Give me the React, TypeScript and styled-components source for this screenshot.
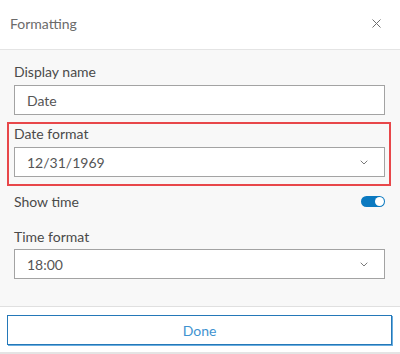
import React from "react";
import styled, { createGlobalStyle } from "styled-components";

const Global = createGlobalStyle`
  html, body { margin: 0; padding: 0; background: #ffffff; }
  body { font-family: Lato, "Noto Sans", sans-serif; }
  * { box-sizing: border-box; }
`;

const Panel = styled.div`
  width: 400px;
  height: 354px;
  display: flex;
  flex-direction: column;
  background: #ffffff;
`;

const Header = styled.div`
  height: 50px;
  display: flex;
  align-items: center;
  justify-content: space-between;
  padding: 0 16px 0 10px;
  border-bottom: 1px solid #e4e4e4;
`;

const Title = styled.div`
  font-size: 14px;
  color: #6b6b6b;
  padding-bottom: 2px;
`;

const CloseButton = styled.button`
  width: 16px;
  height: 16px;
  padding: 0;
  border: 0;
  background: transparent;
  display: flex;
  align-items: center;
  justify-content: center;
  margin-bottom: 2px;
`;

const Body = styled.div`
  height: 257px;
  background: #f8f8f8;
  padding: 12px 15px 0 14px;
  display: flex;
  flex-direction: column;
  border-bottom: 1px solid #e0e0e0;
`;

const Field = styled.div<{ $highlight?: boolean; $gap?: number }>`
  display: flex;
  flex-direction: column;
  margin-top: ${(p) => p.$gap ?? 0}px;
  ${(p) =>
    p.$highlight
      ? `
    margin-left: -7px;
    margin-right: -6px;
    padding: 0 4px 7px 5px;
    border: 2px solid #e8474a;
  `
      : ""}
`;

const Label = styled.div<{ $after?: number }>`
  font-size: 14px;
  line-height: 20px;
  color: #4a4a4a;
  margin-bottom: ${(p) => p.$after ?? 3}px;
`;

const Input = styled.div`
  height: 30px;
  background: #ffffff;
  border: 1px solid #a3a3a3;
  display: flex;
  align-items: center;
  padding: 0 12px 0 12px;
  font-size: 14px;
  color: #555555;
`;

const Select = styled(Input)`
  justify-content: space-between;
  padding-right: 16px;
`;

const SwitchRow = styled.div`
  display: flex;
  align-items: center;
  justify-content: space-between;
  height: 20px;
  margin-top: 6px;
`;

const Switch = styled.div`
  width: 24px;
  height: 11px;
  border-radius: 6px;
  background: #0b79c0;
  position: relative;
  margin-top: -1px;
`;

const Knob = styled.div`
  position: absolute;
  right: 1px;
  top: 1px;
  width: 9px;
  height: 9px;
  border-radius: 50%;
  background: #ffffff;
`;

const Footer = styled.div`
  flex: 1;
  padding: 8px 8px 0 7px;
  border-bottom: 2px solid #e4e4e4;
`;

const DoneButton = styled.button`
  width: 100%;
  height: 30px;
  background: #ffffff;
  border: 1px solid #2478b8;
  box-shadow: 1px 1px 0 #6aaee0;
  font-family: Lato, "Noto Sans", sans-serif;
  font-size: 14px;
  color: #3f93d0;
  padding: 0;
`;

const Chevron = () => (
  <svg width="8" height="5" viewBox="0 0 8 5">
    <path d="M0.7 0.7 L4 4 L7.3 0.7" fill="none" stroke="#7a7a7a" strokeWidth="1" />
  </svg>
);

const CloseIcon = () => (
  <svg width="9" height="9" viewBox="0 0 9 9">
    <path d="M0.5 0.5 L8.5 8.5 M8.5 0.5 L0.5 8.5" stroke="#6e6e6e" strokeWidth="1" />
  </svg>
);

export default function App() {
  return (
    <>
      <Global />
      <Panel>
        <Header>
          <Title>Formatting</Title>
          <CloseButton aria-label="Close">
            <CloseIcon />
          </CloseButton>
        </Header>
        <Body>
          <Field>
            <Label>Display name</Label>
            <Input>Date</Input>
          </Field>
          <Field $highlight $gap={7}>
            <Label>Date format</Label>
            <Select>
              <span>12/31/1969</span>
              <Chevron />
            </Select>
          </Field>
          <SwitchRow>
            <Label $after={0}>Show time</Label>
            <Switch>
              <Knob />
            </Switch>
          </SwitchRow>
          <Field $gap={15}>
            <Label $after={2}>Time format</Label>
            <Select>
              <span>18:00</span>
              <Chevron />
            </Select>
          </Field>
        </Body>
        <Footer>
          <DoneButton>Done</DoneButton>
        </Footer>
      </Panel>
    </>
  );
}
